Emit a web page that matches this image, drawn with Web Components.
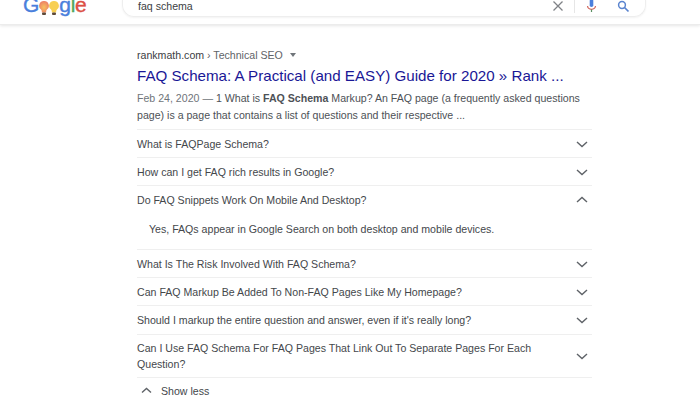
<!DOCTYPE html>
<html><head><meta charset="utf-8">
<style>
html,body{margin:0;padding:0;background:#fff;height:400px;overflow:hidden}
body{font-family:"Liberation Sans",Arial,sans-serif;color:#4d5156}
</style></head><body>
<template id="t-header">
<style>
:host{display:flex;height:25px;box-sizing:border-box;border-bottom:1px solid #ececec;box-shadow:0 1px 3px rgba(0,0,0,.10);padding-left:23px;position:relative}
.logo{width:99px;height:18px;font:400 21px/18px "Liberation Sans",sans-serif;display:flex;align-items:flex-start;flex:none;overflow:hidden;letter-spacing:-.2px}
.logo span{display:block;line-height:22px;height:22px;margin-top:-6px;-webkit-text-stroke:.4px currentColor}
.bulb{flex:none;margin:1px 0 0}
.box{width:524px;height:18px;box-sizing:border-box;margin-top:-1px;border:1px solid #eeeeee;border-top:0;border-radius:0 0 12px 12px;box-shadow:0 1px 2px rgba(0,0,0,.05);display:flex;align-items:center;padding:0 15px 3px 15px;font-size:10.600px;color:#3c4043}
.q{flex:1}
.icons{display:flex;align-items:center}
svg{display:block}
.sep{width:1px;height:14px;background:#e6e6e6;margin:0 11px 0 10px}
</style>
<div class="logo">
<span style="color:#4a7fdc">G</span>
<svg class="bulb" width="10" height="16" viewBox="0 0 10 16"><defs><radialGradient id="b1" cx=".5" cy=".55" r=".6"><stop offset="0" stop-color="#f7c25e"/><stop offset="1" stop-color="#ec7a66"/></radialGradient></defs><path d="M5 0a4.800 4.800 0 0 1 3 8.600c-.6.500-.8 1.500-.9 2.900H2.900c-.1-1.400-.3-2.400-.9-2.900A4.800 4.800 0 0 1 5 0z" fill="url(#b1)"/><rect x="3" y="11.500" width="4" height="2.500" rx="1" fill="#5d4a3a"/></svg>
<svg class="bulb" width="10" height="16" viewBox="0 0 10 16"><path d="M5 0a4.800 4.800 0 0 1 3 8.600c-.6.500-.8 1.500-.9 2.900H2.900c-.1-1.400-.3-2.400-.9-2.900A4.800 4.800 0 0 1 5 0z" fill="#f8cf52"/><rect x="3" y="11.500" width="4" height="2.500" rx="1" fill="#5d4a3a"/></svg>
<span style="color:#4a7fdc">g</span><span style="color:#52a85f">l</span><span style="color:#dc4f45">e</span>
</div>
<div class="box"><span class="q">faq schema</span>
<div class="icons">
<svg width="12" height="12" viewBox="0 0 12 12"><path d="M1.500 1.500l9 9M10.500 1.500l-9 9" stroke="#7f8286" stroke-width="1.300" fill="none"/></svg>
<div class="sep"></div>
<svg width="11" height="14" viewBox="0 0 11 14"><rect x="3.700" y="0" width="3.600" height="8" rx="1.800" fill="#4a7fdc"/><path d="M1.500 7c.3 2.300 2 3.300 4 3.300s3.700-1 4-3.300" stroke="#d0685f" stroke-width="1.200" fill="none"/><path d="M5.500 10.500v2.500" stroke="#5a8f62" stroke-width="1.200"/></svg>
<svg style="margin-left:20px" width="13" height="13" viewBox="0 0 13 13"><circle cx="5" cy="5" r="3.400" stroke="#5a84cf" stroke-width="1.500" fill="none"/><path d="M7.500 7.500l4 4" stroke="#5a84cf" stroke-width="1.700"/></svg>
</div></div>
</template>

<template id="t-result">
<style>
:host{display:block;width:455px;margin-left:137px;padding-top:22px}
.crumb{font-size:10.600px;line-height:16px;color:#5f6368;display:flex;align-items:center}
.crumb b{font-weight:400;color:#3c4043}
.arrow{width:0;height:0;border:3px solid transparent;border-top:4px solid #70757a;border-bottom:0;margin-left:7px}
h3{margin:0;font-weight:400;font-size:15.150px;line-height:22px;color:#1a1796;white-space:nowrap;margin-top:2px}
p{margin:3px 0 0;font-size:10.600px;line-height:17px;color:#4d5156;white-space:nowrap}
p b{color:#4d5156;font-weight:700}
p .d{color:#70757a}
.list{margin-top:5px}
</style>
<div class="crumb"><b>rankmath.com</b>&nbsp;› Technical SEO<span class="arrow"></span></div>
<h3>FAQ Schema: A Practical (and EASY) Guide for 2020 » Rank ...</h3>
<p><span class="d">Feb 24, 2020 — </span>1 What is <b>FAQ Schema</b> Markup? An FAQ page (a frequently asked questions<br>page) is a page that contains a list of questions and their respective ...</p>
<div class="list"><slot></slot></div>
</template>

<template id="t-faq">
<style>
:host{display:block;border-top:1px solid #efefef;font-size:10.600px;color:#44474b}
.row{display:flex;align-items:center;justify-content:space-between;min-height:27px;padding:0 4px 0 0;line-height:16px}
:host([two]) .row{min-height:42px}
:host([tall]) .row{min-height:28px}
.t{width:420px}
svg{display:block;flex:none}
.a{padding:8px 0 11px 12px;line-height:17px;display:none}
:host([open]) .a{display:block}
</style>
<div class="row"><span class="t"><slot name="q"></slot></span>
<svg width="12" height="8" viewBox="0 0 12 8"><path class="c" d="" stroke="#5f6368" stroke-width="1.400" fill="none"/></svg></div>
<div class="a"><slot></slot></div>
</template>

<template id="t-less">
<style>
:host{display:flex;align-items:center;border-top:1px solid #efefef;height:28px;font-size:10.600px;color:#44474b;padding:0 0 2px 4px;box-sizing:border-box}
svg{display:block;margin-right:9px}
</style>
<svg width="11" height="7" viewBox="0 0 11 7"><path d="M1 5.500l4.500-4 4.500 4" stroke="#5f6368" stroke-width="1.400" fill="none"/></svg>
<slot></slot>
</template>

<script>
function reg(name,tid,init){
  customElements.define(name,class extends HTMLElement{
    constructor(){super();
      const s=this.attachShadow({mode:"open"});
      s.appendChild(document.getElementById(tid).content.cloneNode(true));
    }
    connectedCallback(){if(init)init(this,this.shadowRoot);}
  });
}
reg("g-header","t-header");
reg("g-result","t-result");
reg("g-faq","t-faq",(h,s)=>{
  s.querySelector(".c").setAttribute("d",h.hasAttribute("open")?"M1 6l5-4.500 5 4.500":"M1 2l5 4.500 5-4.500");
});
reg("g-less","t-less");
</script>
<g-header></g-header>
<g-result>
<g-faq><span slot="q">What is FAQPage Schema?</span></g-faq>
<g-faq><span slot="q">How can I get FAQ rich results in Google?</span></g-faq>
<g-faq open><span slot="q">Do FAQ Snippets Work On Mobile And Desktop?</span>Yes, FAQs appear in Google Search on both desktop and mobile devices.</g-faq>
<g-faq><span slot="q">What Is The Risk Involved With FAQ Schema?</span></g-faq>
<g-faq><span slot="q">Can FAQ Markup Be Added To Non-FAQ Pages Like My Homepage?</span></g-faq>
<g-faq tall><span slot="q">Should I markup the entire question and answer, even if it's really long?</span></g-faq>
<g-faq two><span slot="q">Can I Use FAQ Schema For FAQ Pages That Link Out To Separate Pages For Each Question?</span></g-faq>
<g-less>Show less</g-less>
</g-result>
</body></html>
